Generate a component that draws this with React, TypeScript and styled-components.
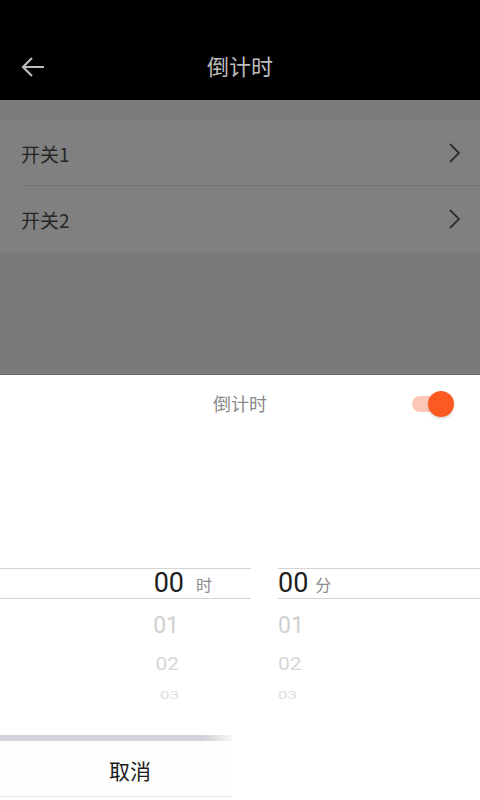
import styled, { createGlobalStyle } from "styled-components";

const Global = createGlobalStyle`
  html, body { margin: 0; padding: 0; }
  body {
    width: 480px;
    height: 800px;
    overflow: hidden;
    background: #fff;
    font-family: "Noto Sans CJK SC", "Noto Sans", sans-serif;
  }
`;

const Screen = styled.div`
  width: 480px;
  height: 800px;
  display: flex;
  flex-direction: column;
`;

const Header = styled.div`
  height: 100px;
  background: #000;
  display: flex;
  flex-direction: column;
  flex-shrink: 0;
`;

const StatusBar = styled.div`
  height: 42px;
`;

const NavBar = styled.div`
  flex: 1;
  display: flex;
  align-items: center;
  padding: 0 0 8px 20px;
  position: relative;
`;

const Title = styled.div`
  position: absolute;
  left: 0;
  right: 0;
  top: 7px;
  text-align: center;
  color: #bcbcbc;
  font-size: 22px;
  line-height: 32px;
  pointer-events: none;
`;

const Dimmed = styled.div`
  height: 275px;
  background: #7a7a7a;
  display: flex;
  flex-direction: column;
  border-bottom: 1px solid #6a6a6a;
  box-sizing: border-box;
`;

const TopStrip = styled.div`
  height: 20px;
  background: #7b7b7b;
`;

const ListRow = styled.div<{ divider?: boolean }>`
  height: 66px;
  background: #808080;
  display: flex;
  align-items: center;
  justify-content: space-between;
  padding: 0 18px 0 21px;
  position: relative;
  &::after {
    content: "";
    display: ${({ divider }) => (divider ? "block" : "none")};
    position: absolute;
    left: 22px;
    right: 0;
    bottom: 0;
    height: 1px;
    background: #727272;
  }
`;

const RowLabel = styled.span`
  font-size: 19px;
  color: #262626;
`;

const Sheet = styled.div`
  flex: 1;
  background: #fff;
  display: flex;
  flex-direction: column;
`;

const SheetHead = styled.div`
  height: 58px;
  position: relative;
  display: flex;
  align-items: center;
  justify-content: center;
`;

const SheetTitle = styled.span`
  font-size: 18px;
  color: #8a8a8a;
  margin-top: -2px;
`;

const Toggle = styled.div`
  position: absolute;
  right: 26px;
  top: 16px;
  width: 44px;
  height: 26px;
  display: flex;
  align-items: center;
`;

const Track = styled.div`
  width: 34px;
  height: 16px;
  border-radius: 8px;
  background: #fbc8b6;
  margin-left: 2px;
`;

const Thumb = styled.div`
  position: absolute;
  right: 0;
  top: 0;
  width: 26px;
  height: 26px;
  border-radius: 50%;
  background: #fd5a22;
  box-shadow: 0 2px 3px rgba(0, 0, 0, 0.15);
`;

const PickerArea = styled.div`
  margin-top: 135px;
  display: flex;
  gap: 27px;
  height: 140px;
`;

const Column = styled.div<{ w: number; align: "right" | "left" }>`
  width: ${({ w }) => w}px;
  display: flex;
  flex-direction: column;
  align-items: ${({ align }) => (align === "right" ? "flex-end" : "flex-start")};
`;

const Selected = styled.div<{ padRight: number }>`
  align-self: stretch;
  height: 29px;
  border-top: 1px solid #d4d4d4;
  border-bottom: 1px solid #d4d4d4;
  display: flex;
  align-items: center;
  justify-content: ${({ padRight }) => (padRight ? "flex-end" : "flex-start")};
  padding-right: ${({ padRight }) => padRight}px;
`;

const Num = styled.span`
  font-family: "Roboto", "Noto Sans", sans-serif;
  font-size: 27px;
  color: #1e1e1e;
  line-height: 29px;
`;

const Unit = styled.span<{ gap: number }>`
  font-size: 16px;
  color: #8a8a8a;
  margin-left: ${({ gap }) => gap}px;
`;

const Item = styled.div<{ size: number; h: number; color: string; squash: number }>`
  font-family: "Roboto", "Noto Sans", sans-serif;
  font-size: ${({ size }) => size}px;
  height: ${({ h }) => h}px;
  line-height: ${({ h }) => h}px;
  color: ${({ color }) => color};
  transform: scaleY(${({ squash }) => squash});
  width: 32px;
`;

const ItemCol = styled.div<{ padRight: number }>`
  margin-right: ${({ padRight }) => padRight}px;
  display: flex;
  flex-direction: column;
`;

const Footer = styled.div`
  margin-top: 27px;
  display: flex;
  flex-direction: column;
  width: 232px;
`;

const GrayBar = styled.div`
  height: 6px;
  background: linear-gradient(90deg, #d2d2d8 0%, #d2d2d8 88%, rgba(220, 220, 226, 0.2) 100%);
`;

const Cancel = styled.div`
  height: 56px;
  box-sizing: border-box;
  background: #fdfdfb;
  border-bottom: 1px solid #e2e2e2;
  display: flex;
  align-items: center;
  justify-content: center;
  padding: 3px 0 0 28px;
  font-size: 21px;
  color: #1c1c1c;
`;

const Chevron = () => (
  <svg width="14" height="22" viewBox="0 0 14 22">
    <path d="M2 2 L11 11 L2 20" fill="none" stroke="#2e2e2e" strokeWidth="1.8" />
  </svg>
);

const Back = () => (
  <svg width="26" height="22" viewBox="0 0 26 22">
    <path d="M3 11 H24 M12 2 L3 11 L12 20" fill="none" stroke="#bcbcbc" strokeWidth="2.2" />
  </svg>
);

const wheel = [
  { v: "01", size: 23, h: 54, color: "#d0d0d0", squash: 1 },
  { v: "02", size: 21, h: 22, color: "#d6d6d6", squash: 0.9 },
  { v: "03", size: 17, h: 40, color: "#dedede", squash: 0.6 },
];

export default function App() {
  return (
    <Screen>
      <Global />
      <Header>
        <StatusBar />
        <NavBar>
          <Back />
          <Title>倒计时</Title>
        </NavBar>
      </Header>
      <Dimmed>
        <TopStrip />
        <ListRow divider>
          <RowLabel>开关1</RowLabel>
          <Chevron />
        </ListRow>
        <ListRow>
          <RowLabel>开关2</RowLabel>
          <Chevron />
        </ListRow>
      </Dimmed>
      <Sheet>
        <SheetHead>
          <SheetTitle>倒计时</SheetTitle>
          <Toggle>
            <Track />
            <Thumb />
          </Toggle>
        </SheetHead>
        <PickerArea>
          <Column w={251} align="right">
            <Selected padRight={39}>
              <Num>00</Num>
              <Unit gap={12}>时</Unit>
            </Selected>
            <ItemCol padRight={72}>
              {wheel.map((w) => (
                <Item key={w.v} size={w.size} h={w.h} color={w.color} squash={w.squash}>
                  {w.v}
                </Item>
              ))}
            </ItemCol>
          </Column>
          <Column w={202} align="left">
            <Selected padRight={0}>
              <Num>00</Num>
              <Unit gap={7}>分</Unit>
            </Selected>
            <ItemCol padRight={0}>
              {wheel.map((w) => (
                <Item key={w.v} size={w.size} h={w.h} color={w.color} squash={w.squash}>
                  {w.v}
                </Item>
              ))}
            </ItemCol>
          </Column>
        </PickerArea>
        <Footer>
          <GrayBar />
          <Cancel>取消</Cancel>
        </Footer>
      </Sheet>
    </Screen>
  );
}
